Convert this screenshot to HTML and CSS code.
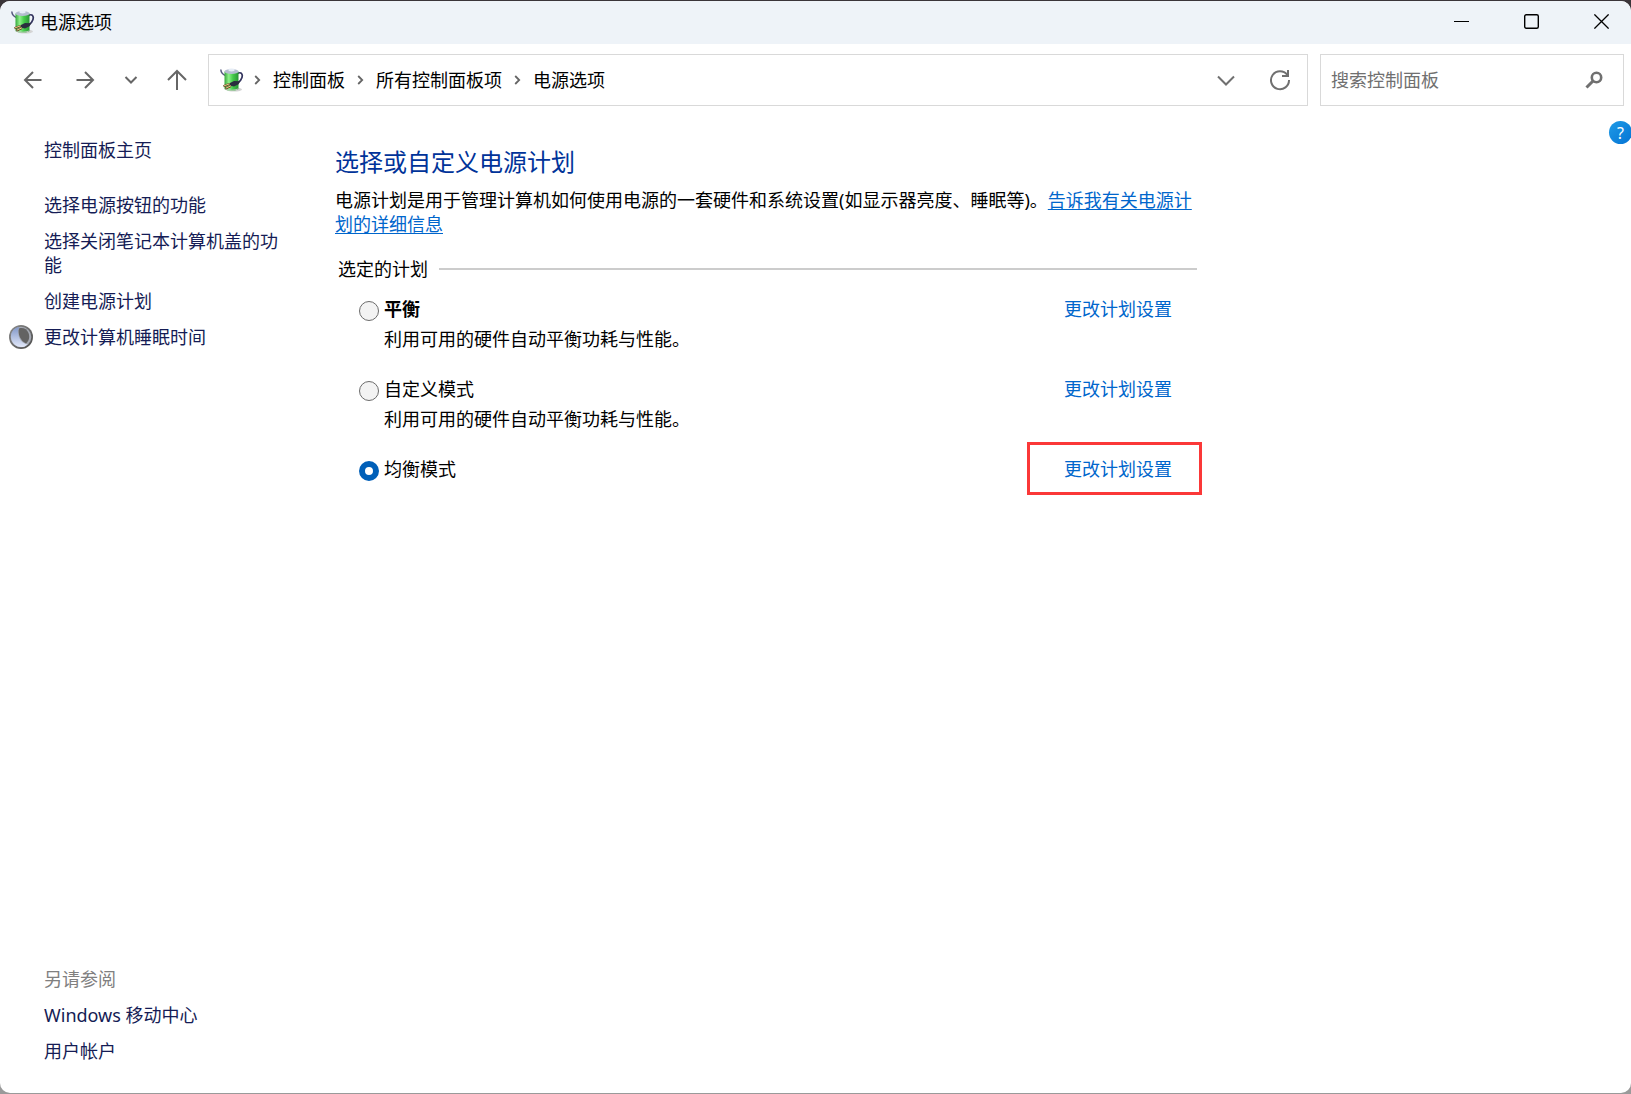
FILE: index.html
```html
<!DOCTYPE html>
<html lang="zh-CN">
<head>
<meta charset="utf-8">
<title>电源选项</title>
<link rel="stylesheet" href="styles.css">
</head>
<body>
<svg class="defs" aria-hidden="true">
  <defs>
    <linearGradient id="cell" x1="0" x2="1" y1="0" y2="0">
      <stop offset="0" stop-color="#37a83c"/><stop offset=".3" stop-color="#8ff08a"/><stop offset=".6" stop-color="#45cc4a"/><stop offset="1" stop-color="#2a9436"/>
    </linearGradient>
    <symbol id="battery" viewBox="0 0 24 24">
      <ellipse cx="14" cy="21.500" rx="8" ry="2" fill="#d4d4d4"/>
      <path d="M.8 1.500C1 5 3 6.500 5.500 7.500" fill="none" stroke="#55587e" stroke-width="1.500"/>
      <path d="M17.500 5.500C21 3.500 23 6 22 9.500S19 14 17 15.500" fill="none" stroke="#34355f" stroke-width="1.700"/>
      <path d="M4.500 3.500h14V21c-2 2.400-12 2.400-14 0z" fill="url(#cell)"/>
      <path d="M4.500 20.200c3 1.900 11 1.900 14 0V21c-2 2.400-12 2.400-14 0z" fill="#b5c8b4"/>
      <ellipse cx="11.500" cy="3.500" rx="7" ry="2.400" fill="#b4bdcf"/>
      <ellipse cx="11.500" cy="2" rx="3.200" ry="1.400" fill="#e6edf6"/>
      <path d="M9 15.500l5-2.500 6.300.2-1.800 3-4.500 2.300-3.500-.8z" fill="#2b2e3f"/>
      <path d="M9.500 16l-6 2.300M11 18l-5.500 2.500" stroke="#5d421c" stroke-width="2"/>
      <path d="M9.500 15.800l-5.500 2.100M11 17.800l-5 2.300" stroke="#edc88e" stroke-width="1"/>
    </symbol>
    <symbol id="crumb" viewBox="0 0 7 10"><path d="M1.200 1l4 4-4 4" fill="none" stroke="#666" stroke-width="1.800"/></symbol>
  </defs>
</svg>
<div class="window">
  <header class="titlebar">
    <svg class="battery"><use href="#battery"/></svg>
    <span class="title">电源选项</span>
    <div class="controls">
      <button type="button" aria-label="最小化"><svg width="15" height="15"><path d="M0 7.500h15" stroke="#000"/></svg></button>
      <button type="button" aria-label="最大化"><svg width="15" height="15"><rect x=".7" y=".7" width="13.600" height="13.600" rx="1.500" fill="none" stroke="#000" stroke-width="1.400"/></svg></button>
      <button type="button" aria-label="关闭"><svg width="15" height="15"><path d="M.4.4l14.200 14.200M14.600.4L.4 14.600" stroke="#000" stroke-width="1.300"/></svg></button>
    </div>
  </header>

  <nav class="toolbar" aria-label="导航">
    <div class="history">
      <button type="button" class="wide" aria-label="后退"><svg width="18" height="18" class="line"><path d="M17.500 9H1M9 1L1 9l8 8"/></svg></button>
      <button type="button" class="wide" aria-label="前进"><svg width="18" height="18" class="line"><path d="M.5 9H17M9 1l8 8-8 8"/></svg></button>
      <button type="button" class="narrow" aria-label="最近浏览的位置"><svg width="14" height="8" class="line"><path d="M1.500 1L7 6.500 12.500 1"/></svg></button>
      <button type="button" class="wide" aria-label="上移"><svg width="20" height="20" class="line"><path d="M10 20V1M1 10l9-9 9 9"/></svg></button>
    </div>
    <div class="address">
      <svg class="battery"><use href="#battery"/></svg>
      <svg class="crumb"><use href="#crumb"/></svg>
      <a href="#">控制面板</a>
      <svg class="crumb"><use href="#crumb"/></svg>
      <a href="#">所有控制面板项</a>
      <svg class="crumb"><use href="#crumb"/></svg>
      <a href="#">电源选项</a>
      <div class="actions">
        <button type="button" aria-label="展开"><svg width="16" height="9" class="line thin"><path d="M0 .5l8 8 8-8"/></svg></button>
        <button type="button" aria-label="刷新"><svg width="20" height="20" class="line thin"><path d="M17.300 5A9 9 0 1 0 19 10M18 0v6h-6"/></svg></button>
      </div>
    </div>
    <label class="search">
      <input type="text" placeholder="搜索控制面板" aria-label="搜索控制面板">
      <svg width="18" height="18"><circle cx="11.500" cy="6.500" r="4.700" fill="none" stroke="#707070" stroke-width="2.600"/><path d="M8 10l-6.500 6.500" stroke="#707070" stroke-width="3"/></svg>
    </label>
  </nav>

  <div class="content">
    <aside class="sidebar">
      <a class="home" href="#">控制面板主页</a>
      <ul class="tasks">
        <li><a href="#">选择电源按钮的功能</a></li>
        <li><a href="#">选择关闭笔记本计算机盖的功能</a></li>
        <li><a href="#">创建电源计划</a></li>
        <li>
          <svg class="moon" viewBox="0 0 24 24" aria-hidden="true">
            <defs>
              <linearGradient id="rim" x1="0" x2="1" y1="0" y2="1"><stop offset="0" stop-color="#8d8d8d"/><stop offset="1" stop-color="#4b4b4b"/></linearGradient>
              <linearGradient id="glow" x1="0" x2="0" y1="0" y2="1"><stop offset="0" stop-color="#8197c8"/><stop offset="1" stop-color="#e2e8fa"/></linearGradient>
            </defs>
            <circle cx="12" cy="12" r="12" fill="url(#rim)"/>
            <circle cx="12" cy="12" r="10.300" fill="#a5a9b3"/>
            <path d="M10 2C4 3 1.700 8 2 12.500 2.500 18 7 22 12 22c3 0 5-1 6.500-2.600C11 18 7.500 10 10 2z" fill="url(#glow)"/>
            <path d="M10 3.500c4-1.500 8 .5 9.500 4.500s.5 8-2.500 10.500C11.500 16 8.500 9 10 3.500z" fill="#636363"/>
          </svg>
          <a href="#">更改计算机睡眠时间</a>
        </li>
      </ul>
      <h2 class="see-also">另请参阅</h2>
      <ul class="related">
        <li><a href="#">Windows 移动中心</a></li>
        <li><a href="#">用户帐户</a></li>
      </ul>
    </aside>

    <main class="main">
      <h1>选择或自定义电源计划</h1>
      <p class="intro">电源计划是用于管理计算机如何使用电源的一套硬件和系统设置(如显示器亮度、睡眠等)。<a href="#">告诉我有关电源计划的详细信息</a></p>
      <div class="group-title"><h2 id="plans-title">选定的计划</h2><span class="rule"></span></div>
      <div class="plans" role="radiogroup" aria-labelledby="plans-title">
        <div class="plan">
          <input type="radio" name="plan" id="balanced">
          <label for="balanced" class="recommended">平衡</label>
          <a href="#">更改计划设置</a>
          <p>利用可用的硬件自动平衡功耗与性能。</p>
        </div>
        <div class="plan">
          <input type="radio" name="plan" id="custom">
          <label for="custom">自定义模式</label>
          <a href="#">更改计划设置</a>
          <p>利用可用的硬件自动平衡功耗与性能。</p>
        </div>
        <div class="plan">
          <input type="radio" name="plan" id="even" checked>
          <label for="even">均衡模式</label>
          <a href="#" class="marked">更改计划设置</a>
        </div>
      </div>
    </main>

    <button type="button" class="help" aria-label="帮助">?</button>
  </div>
</div>
</body>
</html>
```

FILE: styles.css
```css
* { box-sizing: border-box; }

body {
  margin: 0;
  background: linear-gradient(#3a3539 0, #3a3539 12px, #9a9a9a 12px);
  color: #000;
  font: 18px/24px "Noto Sans", "Noto Sans CJK SC", sans-serif;
}

h1, h2, p, ul { margin: 0; padding: 0; font-size: 18px; font-weight: 400; }
ul { list-style: none; }
a { color: #0066cc; text-decoration: none; }
svg { flex: none; display: block; }

button {
  display: flex;
  align-items: center;
  justify-content: center;
  padding: 0;
  border: 0;
  background: none;
  font: inherit;
}

.defs { position: absolute; width: 0; height: 0; }

.window {
  display: flex;
  flex-direction: column;
  min-height: calc(100vh - 2px);
  margin: 1px 0;
  overflow: hidden;
  border-radius: 10px;
  background: #fff;
}

/* Title bar */
.titlebar {
  display: flex;
  align-items: center;
  height: 43px;
  padding: 0 0 2px 11px;
  background: #eef3f8;
}
.battery { width: 24px; height: 24px; }
.title { margin-left: 5px; }
.controls { display: flex; gap: 10px; height: 100%; margin-left: auto; }
.controls button { width: 60px; }

/* Toolbar */
.toolbar { display: flex; gap: 12px; padding: 10px 7px 0; }
.history { display: flex; margin-right: -7px; }
.history .wide { width: 52px; }
.history .narrow { width: 40px; }
.line { fill: none; stroke: #666; stroke-width: 2px; overflow: visible; }
.thin { stroke-width: 2px; stroke: #707070; }
.address, .search { height: 52px; border: 1px solid #d9d9d9; background: #fff; }
.address {
  flex: 1;
  display: flex;
  align-items: center;
  gap: 12px;
  padding-left: 11px;
}
.address .battery { margin-right: -2px; }
.address a { color: #000; white-space: nowrap; }
.crumb { width: 7px; height: 10px; }
.actions { display: flex; margin-left: auto; height: 100%; }
.actions button { width: 54px; }
.search {
  flex: 0 1 304px;
  display: flex;
  align-items: center;
  min-width: 0;
  padding: 0 20px 0 10px;
}
.search input {
  flex: 1;
  width: 0;
  min-width: 0;
  padding: 0;
  border: 0;
  outline: 0;
  background: none;
  color: #000;
  font: inherit;
}
.search input::placeholder { color: #707070; opacity: 1; }

/* Page body */
.content { flex: 1; display: flex; align-items: stretch; }

.sidebar {
  flex: none;
  display: flex;
  flex-direction: column;
  width: 291px;
  padding: 32px 0 30px 44px;
}
.sidebar a { color: #151c55; }
.tasks, .related { display: flex; flex-direction: column; gap: 12px; }
.tasks { margin-top: 31px; }
.tasks li { position: relative; }
.moon { position: absolute; left: -35px; top: 0; width: 24px; height: 24px; }
.see-also { margin-top: auto; margin-bottom: 12px; color: #808080; }

.main { flex: 0 1 906px; padding: 40px 0 32px 44px; }
.main h1 { color: #003399; font-size: 24px; line-height: 32px; }
.intro { margin-top: 10px; }
.intro a { text-decoration: underline; text-underline-offset: 2px; }

.group-title { display: flex; align-items: center; gap: 11px; margin-top: 21px; padding-left: 3px; }
.rule { flex: 1; height: 2px; background: #ccc; }

.plans { display: flex; flex-direction: column; gap: 26px; margin-top: 16px; padding: 0 25px 0 24px; }
.plan { display: grid; grid-template-columns: 20px 1fr auto; column-gap: 5px; row-gap: 6px; align-items: center; }
.plan p { grid-column: 2; }
.recommended { font-weight: 700; }
.plan input {
  appearance: none;
  width: 20px;
  height: 20px;
  margin: 4px 0 0;
  border: 1px solid #6b6b6b;
  border-radius: 50%;
  background: #f3f3f3;
}
.plan input:checked { border: 6px solid #005fb8; background: #fff; }

.marked { position: relative; }
.marked::after {
  content: "";
  position: absolute;
  inset: -15px -30px -14px -37px;
  border: 3px solid #fb3838;
  pointer-events: none;
}

.help {
  flex: none;
  width: 23px;
  height: 23px;
  margin: 15px -1px 0 auto;
  border-radius: 50%;
  background: linear-gradient(135deg, #1e9be6, #0573d4);
  color: #fff;
  font-size: 16px;
}
```
